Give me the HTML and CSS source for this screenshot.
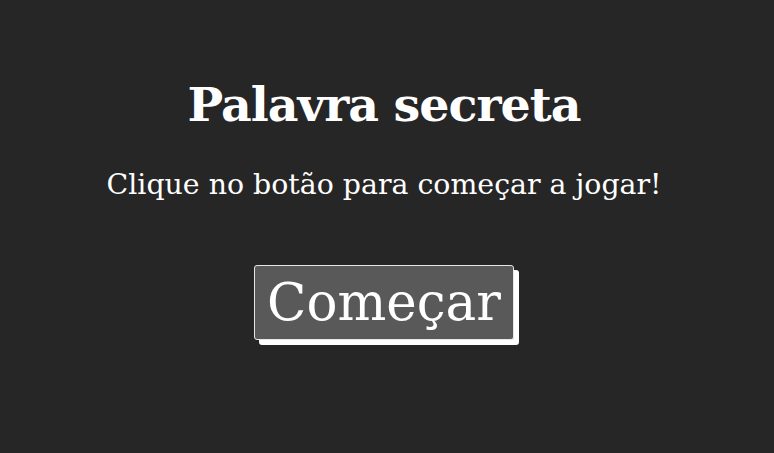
FILE: index.html
```html
<!DOCTYPE html>
<html lang="pt">
<head>
<meta charset="utf-8">
<title>Palavra secreta</title>
<link rel="stylesheet" href="styles.css">
</head>
<body>
<main class="start">
  <h1 class="title">Palavra secreta</h1>
  <p class="subtitle">Clique no botão para começar a jogar!</p>
  <button class="start-btn">Começar</button>
</main>
</body>
</html>
```
FILE: styles.css
```css
html, body {
  margin: 0;
  height: 100%;
}
body {
  background: #262626;
  color: #fff;
  font-family: "DejaVu Serif", serif;
}
.start {
  display: flex;
  flex-direction: column;
  align-items: center;
  padding: 71px 6px 0 0;
}
.title {
  margin: 0;
  font-size: 47.5px;
  font-weight: bold;
  line-height: 66px;
  letter-spacing: -1px;
}
.subtitle {
  margin: 28px 0 0;
  font-size: 28.4px;
  line-height: 40px;
}
.start-btn {
  margin-top: 60px;
  font-family: "DejaVu Serif", serif;
  font-size: 51.5px;
  color: #fff;
  background: #595959;
  border: 1px solid #e6e6e6;
  border-radius: 3px;
  padding: 7px 12px;
  line-height: 59px;
  box-shadow: 5px 5px 0 #fff;
}
```
